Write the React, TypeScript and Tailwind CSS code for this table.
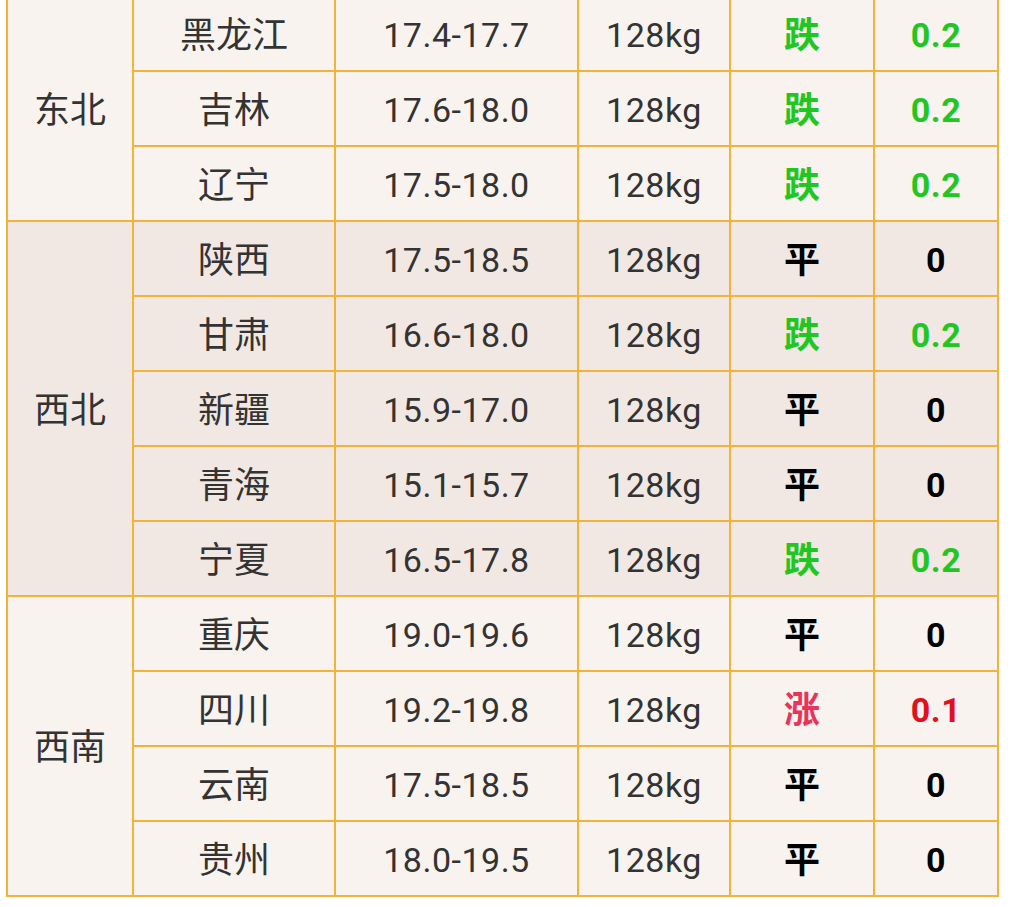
import React from "react"

type Row = { name: string; price: string; trend: "跌" | "平" | "涨"; diff: string }

const groups: { region: string; shade: string; rows: Row[] }[] = [
  {
    region: "东北",
    shade: "bg-[#f8f3ef]",
    rows: [
      { name: "黑龙江", price: "17.4-17.7", trend: "跌", diff: "0.2" },
      { name: "吉林", price: "17.6-18.0", trend: "跌", diff: "0.2" },
      { name: "辽宁", price: "17.5-18.0", trend: "跌", diff: "0.2" },
    ],
  },
  {
    region: "西北",
    shade: "bg-[#f2e8e3]",
    rows: [
      { name: "陕西", price: "17.5-18.5", trend: "平", diff: "0" },
      { name: "甘肃", price: "16.6-18.0", trend: "跌", diff: "0.2" },
      { name: "新疆", price: "15.9-17.0", trend: "平", diff: "0" },
      { name: "青海", price: "15.1-15.7", trend: "平", diff: "0" },
      { name: "宁夏", price: "16.5-17.8", trend: "跌", diff: "0.2" },
    ],
  },
  {
    region: "西南",
    shade: "bg-[#f8f3ef]",
    rows: [
      { name: "重庆", price: "19.0-19.6", trend: "平", diff: "0" },
      { name: "四川", price: "19.2-19.8", trend: "涨", diff: "0.1" },
      { name: "云南", price: "17.5-18.5", trend: "平", diff: "0" },
      { name: "贵州", price: "18.0-19.5", trend: "平", diff: "0" },
    ],
  },
]

const trendColor = {
  跌: "text-[#22c622]",
  平: "text-black",
  涨: "text-[#e8345a]",
}

const diffColor = {
  跌: "text-[#22c622]",
  平: "text-black",
  涨: "text-[#e0101e]",
}

const cell = "border-2 border-[#f3b23a] text-center align-middle p-0 pt-[4px]"

export default function App() {
  return (
    <div className="w-[1016px] h-[907px] bg-white overflow-hidden font-['Roboto','Noto_Sans_CJK_SC',sans-serif]">
      <table className="-mt-[5px] ml-[6px] w-[991px] table-fixed border-collapse text-[34px] tracking-[0.5px] text-[#333333]">
        <colgroup>
          <col className="w-[126px]" />
          <col className="w-[202px]" />
          <col className="w-[243px]" />
          <col className="w-[152px]" />
          <col className="w-[144px]" />
          <col className="w-[124px]" />
        </colgroup>
        <tbody>
          {groups.map((g) =>
            g.rows.map((r, i) => (
              <tr key={r.name} className={`h-[75px] ${g.shade}`}>
                {i === 0 && (
                  <td rowSpan={g.rows.length} className={`${cell} text-[36px] tracking-normal`}>
                    {g.region}
                  </td>
                )}
                <td className={`${cell} text-[36px] tracking-normal`}>{r.name}</td>
                <td className={cell}>{r.price}</td>
                <td className={cell}>128kg</td>
                <td className={`${cell} font-bold text-[36px] tracking-normal ${trendColor[r.trend]}`}>{r.trend}</td>
                <td className={`${cell} font-bold ${diffColor[r.trend]}`}>{r.diff}</td>
              </tr>
            ))
          )}
        </tbody>
      </table>
    </div>
  )
}
